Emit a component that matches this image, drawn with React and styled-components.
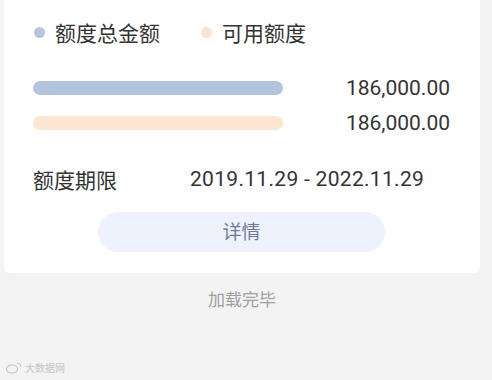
import React from "react";
import styled, { createGlobalStyle } from "styled-components";

const GlobalStyle = createGlobalStyle`
  html, body {
    margin: 0;
    padding: 0;
    background: #f3f3f3;
    font-family: Roboto, "Noto Sans CJK SC", sans-serif;
  }
`;

const Page = styled.div`
  width: 492px;
  height: 380px;
  background: #f3f3f3;
  overflow: hidden;
  display: flex;
  flex-direction: column;
`;

const Card = styled.div`
  margin: 0 12px 0 4px;
  height: 273px;
  background: #fff;
  border-radius: 0 0 6px 6px;
  box-sizing: border-box;
  padding: 17px 30px 0 29px;
  display: flex;
  flex-direction: column;
`;

const Legend = styled.div`
  display: flex;
  align-items: center;
  height: 30px;
`;

const LegendItem = styled.div`
  display: flex;
  align-items: center;
  margin-right: 40px;
  font-size: 21px;
  color: #333;
  font-family: "Noto Sans CJK SC", sans-serif;
`;

const Dot = styled.span`
  width: 11px;
  height: 11px;
  border-radius: 50%;
  background: ${(p) => p.color};
  margin: 0 10px 0 1px;
`;

const Bars = styled.div`
  margin-top: 34px;
  display: flex;
  flex-direction: column;
  gap: 21px;
`;

const BarRow = styled.div`
  display: flex;
  align-items: center;
  justify-content: space-between;
  height: 14px;
`;

const Bar = styled.div`
  width: 250px;
  height: 14px;
  border-radius: 7px;
  background: ${(p) => p.color};
`;

const Amount = styled.span`
  font-size: 21px;
  color: #333;
`;

const TermRow = styled.div`
  margin-top: 35px;
  display: flex;
  align-items: center;
  height: 28px;
`;

const TermLabel = styled.span`
  font-family: "Noto Sans CJK SC", sans-serif;
  font-size: 21px;
  color: #333;
  width: 157px;
`;

const TermValue = styled.span`
  font-size: 21px;
  letter-spacing: 0.3px;
  color: #333;
`;

const DetailButton = styled.button`
  margin: 19px 0 0 65px;
  width: 287px;
  height: 40px;
  border: none;
  border-radius: 20px;
  background: #eef2fc;
  color: #6d7b98;
  font-family: "Noto Sans CJK SC", sans-serif;
  font-size: 19px;
  cursor: pointer;
  padding: 0 0 4px;
`;

const Footer = styled.div`
  margin-top: 13px;
  text-align: center;
  font-family: "Noto Sans CJK SC", sans-serif;
  font-size: 17px;
  color: #a0a0a0;
  padding-right: 8px;
`;

const Watermark = styled.div`
  margin-top: auto;
  margin-bottom: 5px;
  padding-left: 6px;
  display: flex;
  align-items: center;
  gap: 3px;
  font-family: "Noto Sans CJK SC", sans-serif;
  font-size: 10px;
  color: #c4c4c4;
`;

const App = () => {
  return (
    <>
      <GlobalStyle />
      <Page>
        <Card>
          {/* legend */}
          <Legend>
            <LegendItem>
              <Dot color="#b5c5dc" />
              额度总金额
            </LegendItem>
            <LegendItem>
              <Dot color="#fde3cf" />
              可用额度
            </LegendItem>
          </Legend>

          {/* bars */}
          <Bars>
            <BarRow>
              <Bar color="#b3c4df" />
              <Amount>186,000.00</Amount>
            </BarRow>
            <BarRow>
              <Bar color="#fde6d1" />
              <Amount>186,000.00</Amount>
            </BarRow>
          </Bars>

          <TermRow>
            <TermLabel>额度期限</TermLabel>
            <TermValue>2019.11.29 - 2022.11.29</TermValue>
          </TermRow>

          <DetailButton>详情</DetailButton>
        </Card>

        <Footer>加载完毕</Footer>

        <Watermark>
          <svg width="16" height="12" viewBox="0 0 16 12">
            <ellipse cx="6" cy="7" rx="5.5" ry="4" fill="none" stroke="#c4c4c4" strokeWidth="1.2" />
            <path d="M11 1 a4 4 0 0 1 4 4" fill="none" stroke="#c4c4c4" strokeWidth="1" />
          </svg>
          大数据网
        </Watermark>
      </Page>
    </>
  );
};

export default App;
